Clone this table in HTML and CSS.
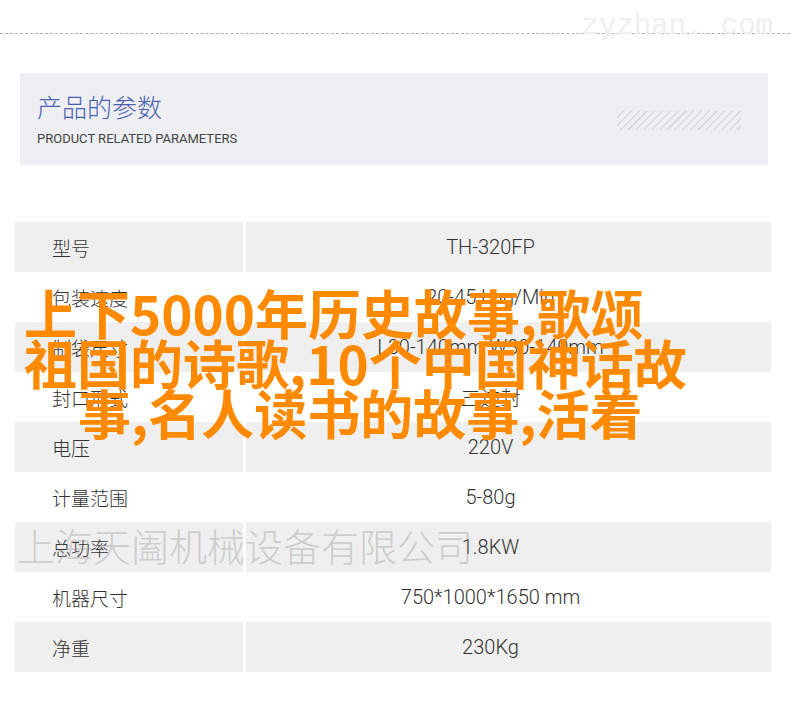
FILE: index.html
```html
<!DOCTYPE html>
<html>
<head>
    <title>产品的参数</title>
    <link rel="stylesheet" href="styles.css">
</head>
<body>
    <div class="page">
        <div class="topbar">
            <span class="site-mark">zyzhan. com</span>
        </div>

        <div class="params-head">
            <div class="head-text">
                <h2>产品的参数</h2>
                <p>PRODUCT RELATED PARAMETERS</p>
            </div>
            <div class="stripes"></div>
        </div>

        <div class="spec-table">
            <div class="spec-row"><div class="label">型号</div><div class="value">TH-320FP</div></div>
            <div class="spec-row"><div class="label">包装速度</div><div class="value">20-45 bag/Min</div></div>
            <div class="spec-row"><div class="label">制袋尺寸</div><div class="value">L30-140mm W30-140mm</div></div>
            <div class="spec-row"><div class="label">封口形式</div><div class="value">三边封</div></div>
            <div class="spec-row"><div class="label">电压</div><div class="value">220V</div></div>
            <div class="spec-row"><div class="label">计量范围</div><div class="value">5-80g</div></div>
            <div class="spec-row"><div class="label">总功率</div><div class="value">1.8KW</div></div>
            <div class="spec-row"><div class="label">机器尺寸</div><div class="value">750*1000*1650 mm</div></div>
            <div class="spec-row"><div class="label">净重</div><div class="value">230Kg</div></div>
        </div>

        <!-- 叠在表格上的标题和水印 -->
        <div class="overlay-title">
            <span>上下5000年历史故事,歌颂</span>
            <span>祖国的诗歌,10个中国神话故</span>
            <span class="indent">事,名人读书的故事,活着</span>
        </div>
        <div class="company-mark">上海天阖机械设备有限公司</div>
    </div>
</body>
</html>
```

FILE: styles.css
```css
body { margin: 0; background: #fff; font-family: Roboto, "Noto Sans CJK SC", sans-serif; color: #444; }
.page { position: relative; width: 790px; height: 715px; overflow: hidden; }

.topbar { height: 33px; border-bottom: 1px dashed #b0b0b0; margin-bottom: 39px; position: relative; }
.site-mark { position: absolute; right: 17px; top: 10px; font-family: "Liberation Mono", monospace; font-size: 29px; color: #efefef; }

.params-head { margin: 0 22px 0 20px; height: 92px; background: #eeeff3; display: flex; align-items: center; justify-content: space-between; padding: 0 27px 0 17px; box-sizing: border-box; }
.head-text h2 { margin: 0; font-family: "Noto Sans CJK SC", sans-serif; font-weight: 300; font-size: 25px; line-height: 30px; color: #4a60b3; }
.head-text p { margin: 10px 0 0; font-size: 13px; line-height: 16px; color: #444; }
.stripes { width: 124px; height: 19px; margin-top: 2px; background: repeating-linear-gradient(135deg, #eeeff3 0 4px, #d9dadf 4px 5.5px); }

.spec-table { margin: 57px 0 0 15px; width: 756px; }
.spec-row { display: grid; grid-template-columns: 228px 525px; column-gap: 3px; height: 50px; }
.spec-row:nth-child(odd) .label, .spec-row:nth-child(odd) .value { background: #efefef; }
.label { padding-left: 37px; display: flex; align-items: center; font-family: "Noto Sans CJK SC", sans-serif; font-weight: 300; font-size: 19px; color: #333; }
.value { display: flex; align-items: center; justify-content: center; padding-right: 36px; font-size: 20px; font-weight: 300; color: #333; }

.overlay-title { position: absolute; left: 24px; top: 287px; font-family: "Noto Sans CJK SC", sans-serif; font-weight: 700; font-size: 53px; line-height: 50px; color: #ff8a00; }
.overlay-title span { display: block; white-space: nowrap; }
.overlay-title .indent { padding-left: 54px; }

.company-mark { position: absolute; left: 17px; top: 522px; font-family: "Noto Sans CJK SC", sans-serif; font-weight: 300; font-size: 38px; line-height: 46px; color: rgba(150, 150, 150, 0.4); white-space: nowrap; }
```
